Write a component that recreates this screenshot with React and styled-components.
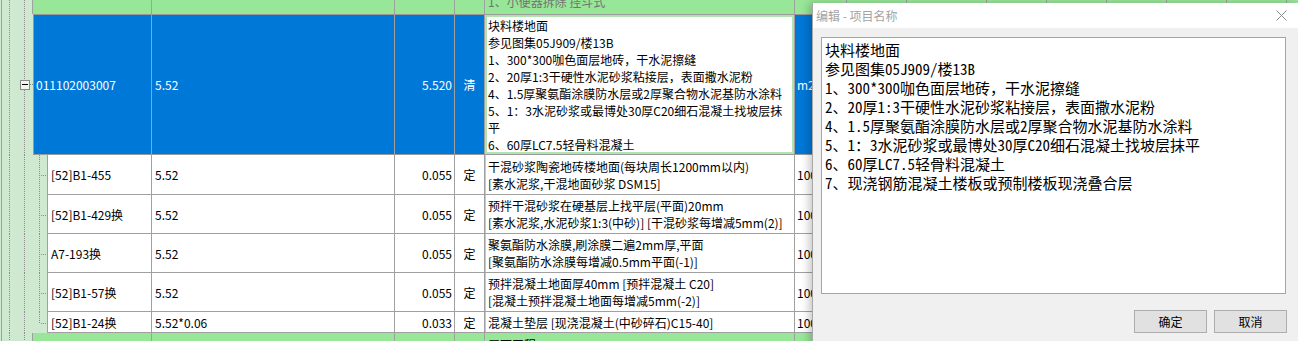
import React from 'react';
import styled, { createGlobalStyle, css } from 'styled-components';

const GlobalStyle = createGlobalStyle`
  html, body { margin: 0; padding: 0; background: #fff; }
  body {
    width: 1298px; height: 341px; overflow: hidden;
    font-family: "Noto Sans CJK SC", "Noto Sans", sans-serif;
    font-size: 12px;
  }
`;

const COLS = '33px 119px 243px 60px 30px 310px 52px 60px 80px 60px 60px 60px 60px 60px 1fr';
const GRID = '#a0a0a0';
const GREEN = '#98e698';
const LIGHT = '#cfe8d0';
const BLUE = '#0078d7';

const Screen = styled.div`
  position: relative;
  width: 1298px;
  height: 341px;
  overflow: hidden;
  background: #fff;
`;

const Table = styled.div`
  display: flex;
  flex-direction: column;
`;

const Row = styled.div`
  position: relative;
  display: grid;
  grid-template-columns: ${COLS};
  grid-template-rows: minmax(0, 1fr);
  height: ${p => p.$h}px;
  flex: none;
  overflow: hidden;
  background: ${p => (p.$kind === 'green' ? GREEN : p.$kind === 'sel' ? BLUE : '#fff')};
  color: ${p => (p.$kind === 'sel' ? '#fff' : '#000')};
  line-height: 17px;
  ${p => p.$kind === 'sel' && css`
    &::after {
      content: '';
      position: absolute;
      left: 33px; right: 0; top: 0; bottom: 0;
      pointer-events: none;
      background:
        repeating-linear-gradient(90deg, #e8882c 0 1px, #9a9a9a 1px 2px) left top / 100% 1px no-repeat,
        repeating-linear-gradient(90deg, #e8882c 0 1px, #9a9a9a 1px 2px) left bottom / 100% 1px no-repeat,
        repeating-linear-gradient(180deg, #e8882c 0 1px, #9a9a9a 1px 2px) left top / 1px 100% no-repeat;
    }
  `}
`;

const dotted = (x) => `repeating-linear-gradient(180deg, #8c8c8c 0 1px, transparent 1px 2px) ${x}px 0 / 1px 100% no-repeat`;

const Gutter = styled.div`
  position: relative;
  box-sizing: border-box;
  display: flex;
  align-items: center;
  padding-left: 20px;
  background:
    linear-gradient(${GRID}, ${GRID}) 1px 0 / 1px 100% no-repeat,
    ${dotted(9)},
    ${dotted(24)},
    ${LIGHT};
  border-right: ${p => (p.$edge ? `1px solid ${GRID}` : 'none')};
`;

const ExpandBox = styled.span`
  box-sizing: border-box;
  width: 10px;
  height: 10px;
  border: 1px solid #8a8a8a;
  background: #eef6ee;
  display: flex;
  align-items: center;
  justify-content: center;
  &::before {
    content: '';
    width: 6px;
    height: 1px;
    background: #000;
  }
`;

const Connector = styled.span`
  width: 3px;
  height: 1px;
  background: repeating-linear-gradient(90deg, #8c8c8c 0 1px, transparent 1px 2px);
`;

const Cell = styled.div`
  box-sizing: border-box;
  min-width: 0;
  min-height: 0;
  overflow: hidden;
  white-space: nowrap;
  display: flex;
  align-items: center;
  justify-content: ${p => (p.$align === 'right' ? 'flex-end' : p.$align === 'center' ? 'center' : 'flex-start')};
  padding: 0 ${p => (p.$align === 'right' ? '2px' : '3px')};
  border-right: 1px solid ${GRID};
  border-bottom: ${p => (p.$noBottom ? 'none' : `1px solid ${GRID}`)};
  ${p => p.$thickLeft && css`box-shadow: inset 1px 0 0 #c8c8c8;`}
`;

const UnitCell = styled(Cell)`
  padding-left: 2px;
  border-right: none;
`;

const TopText = styled(Cell)`
  align-items: flex-start;
  color: #737373;
  & > span { margin-top: -7px; }
`;

const BottomText = styled(Cell)`
  align-items: flex-start;
  & > span { margin-top: 3px; }
`;

const CodeCell = styled.div`
  display: flex;
  min-width: 0;
  border-right: 1px solid ${GRID};
`;

const Indent = styled.div`
  position: relative;
  flex: none;
  width: 15px;
  box-sizing: border-box;
  border-right: 1px solid ${GRID};
  background: ${LIGHT};
  &::before {
    content: '';
    position: absolute;
    left: 6px; top: 0;
    width: 1px;
    height: ${p => (p.$last ? '50%' : '100%')};
    background: repeating-linear-gradient(180deg, #8c8c8c 0 1px, transparent 1px 2px);
  }
  &::after {
    content: '';
    position: absolute;
    left: 7px; top: 50%;
    width: 7px; height: 1px;
    background: repeating-linear-gradient(90deg, transparent 0 1px, #8c8c8c 1px 2px);
  }
`;

const CodeText = styled.div`
  flex: 1;
  min-width: 0;
  display: flex;
  align-items: center;
  padding-left: 3px;
  border-bottom: 1px solid ${GRID};
  white-space: nowrap;
  overflow: hidden;
`;

const NameCell = styled(Cell)`
  flex-direction: column;
  align-items: flex-start;
  justify-content: center;
  box-shadow: inset 1px 0 0 #c8c8c8;
`;

const EditCell = styled.div`
  box-sizing: border-box;
  border-right: 1px solid ${GRID};
  padding: 1px 0;
  min-width: 0;
  min-height: 0;
  overflow: hidden;
`;

const EditBox = styled.div`
  box-sizing: border-box;
  height: 100%;
  background: #fff;
  color: #000;
  border: 2px solid #b2e2b2;
  padding-left: 1px;
  overflow: hidden;
  white-space: nowrap;
  line-height: 17px;
`;

const Line = styled.div`
  white-space: nowrap;
`;

const Dialog = styled.div`
  position: absolute;
  left: 812px;
  top: 3px;
  width: 486px;
  height: 345px;
  box-sizing: border-box;
  background: #f0f0f0;
  border-left: 1px solid #a8a8a8;
  box-shadow: -3px 0 8px rgba(0, 0, 0, 0.22);
  display: flex;
  flex-direction: column;
`;

const TitleBar = styled.div`
  height: 25px;
  flex: none;
  background: #fff;
  display: flex;
  align-items: center;
  justify-content: space-between;
  padding: 0 11px 0 3px;
  color: #a3a3a3;
  font-size: 12px;
`;

const Body = styled.div`
  display: flex;
  flex-direction: column;
  padding: 9px 11px 0 8px;
`;

const TextBox = styled.div`
  box-sizing: border-box;
  width: 465px;
  height: 257px;
  background: #fff;
  border: 1px solid #a5a5a5;
  padding: 2px 3px;
  font-family: "Noto Sans Mono CJK SC", "Noto Sans CJK SC", monospace;
  font-size: 15px;
  font-weight: 300;
  line-height: 19px;
  color: #000;
  white-space: pre;
  overflow: hidden;
`;

const Buttons = styled.div`
  display: flex;
  justify-content: flex-end;
  gap: 7px;
  margin-top: 16px;
`;

const Button = styled.button`
  box-sizing: border-box;
  width: 73px;
  height: 23px;
  background: #e1e1e1;
  border: 1px solid #adadad;
  border-radius: 0;
  font-family: "Noto Sans CJK SC", sans-serif;
  font-size: 12px;
  color: #000;
  padding: 0;
`;

const CloseIcon = () => (
  <svg width="11" height="11" viewBox="0 0 11 11">
    <path d="M0.5 0.5 L10.5 10.5 M10.5 0.5 L0.5 10.5" stroke="#8a8a8a" strokeWidth="1" fill="none" />
  </svg>
);

const EXTRA = 8;

const Extras = ({ noBottom }) =>
  Array.from({ length: EXTRA }, (_, i) => <Cell key={i} $noBottom={noBottom} />);

const nameLines = [
  '块料楼地面',
  '参见图集05J909/楼13B',
  '1、300*300咖色面层地砖，干水泥擦缝',
  '2、20厚1:3干硬性水泥砂浆粘接层，表面撒水泥粉',
  '4、1.5厚聚氨酯涂膜防水层或2厚聚合物水泥基防水涂料',
  '5、1：3水泥砂浆或最博处30厚C20细石混凝土找坡层抹',
  '平',
  '6、60厚LC7.5轻骨料混凝土',
];

const dialogText = [
  '块料楼地面',
  '参见图集05J909/楼13B',
  '1、300*300咖色面层地砖，干水泥擦缝',
  '2、20厚1:3干硬性水泥砂浆粘接层，表面撒水泥粉',
  '4、1.5厚聚氨酯涂膜防水层或2厚聚合物水泥基防水涂料',
  '5、1：3水泥砂浆或最博处30厚C20细石混凝土找坡层抹平',
  '6、60厚LC7.5轻骨料混凝土',
  '7、现浇钢筋混凝土楼板或预制楼板现浇叠合层',
].join('\n');

const children = [
  { code: '[52]B1-455', expr: '5.52', qty: '0.055', name: ['干混砂浆陶瓷地砖楼地面(每块周长1200mm以内)', '[素水泥浆,干混地面砂浆 DSM15]'], h: 40 },
  { code: '[52]B1-429换', expr: '5.52', qty: '0.055', name: ['预拌干混砂浆在硬基层上找平层(平面)20mm', '[素水泥浆,水泥砂浆1:3(中砂)] [干混砂浆每增减5mm(2)]'], h: 39 },
  { code: 'A7-193换', expr: '5.52', qty: '0.055', name: ['聚氨酯防水涂膜,刷涂膜二遍2mm厚,平面', '[聚氨酯防水涂膜每增减0.5mm平面(-1)]'], h: 39 },
  { code: '[52]B1-57换', expr: '5.52', qty: '0.055', name: ['预拌混凝土地面厚40mm [预拌混凝土 C20]', '[混凝土预拌混凝土地面每增减5mm(-2)]'], h: 39 },
  { code: '[52]B1-24换', expr: '5.52*0.06', qty: '0.033', name: ['混凝土垫层 [现浇混凝土(中砂碎石)C15-40]'], h: 21 },
];

export default function App() {
  return (
    <Screen>
      <GlobalStyle />
      <Table>
        <Row $h={14} $kind="green">
          <Gutter $edge />
          <Cell $noBottom />
          <Cell $noBottom />
          <Cell $noBottom />
          <Cell $noBottom />
          <TopText $noBottom $thickLeft><span>1、小便器拆除 挂斗式</span></TopText>
          <Extras noBottom />
        </Row>

        <Row $h={141} $kind="sel">
          <Gutter>
            <ExpandBox />
            <Connector />
          </Gutter>
          <Cell $noBottom>011102003007</Cell>
          <Cell $noBottom>5.52</Cell>
          <Cell $noBottom $align="right">5.520</Cell>
          <Cell $noBottom $align="center">清</Cell>
          <EditCell>
            <EditBox>
              {nameLines.map((l, i) => <Line key={i}>{l}</Line>)}
            </EditBox>
          </EditCell>
          <UnitCell $noBottom>m2</UnitCell>
        </Row>

        {children.map((c, i) => (
          <Row key={i} $h={c.h}>
            <Gutter />
            <CodeCell>
              <Indent $last={i === children.length - 1} />
              <CodeText>{c.code}</CodeText>
            </CodeCell>
            <Cell>{c.expr}</Cell>
            <Cell $align="right">{c.qty}</Cell>
            <Cell $align="center">定</Cell>
            <NameCell>
              {c.name.map((n, j) => <Line key={j}>{n}</Line>)}
            </NameCell>
            <UnitCell>100m2</UnitCell>
          </Row>
        ))}

        <Row $h={20} $kind="green">
          <Gutter $edge />
          <Cell $noBottom />
          <Cell $noBottom />
          <Cell $noBottom />
          <Cell $noBottom />
          <BottomText $noBottom $thickLeft><span>屋面工程</span></BottomText>
          <Extras noBottom />
        </Row>
      </Table>

      <Dialog>
        <TitleBar>
          <span>编辑 - 项目名称</span>
          <CloseIcon />
        </TitleBar>
        <Body>
          <TextBox>{dialogText}</TextBox>
          <Buttons>
            <Button>确定</Button>
            <Button>取消</Button>
          </Buttons>
        </Body>
      </Dialog>
    </Screen>
  );
}
